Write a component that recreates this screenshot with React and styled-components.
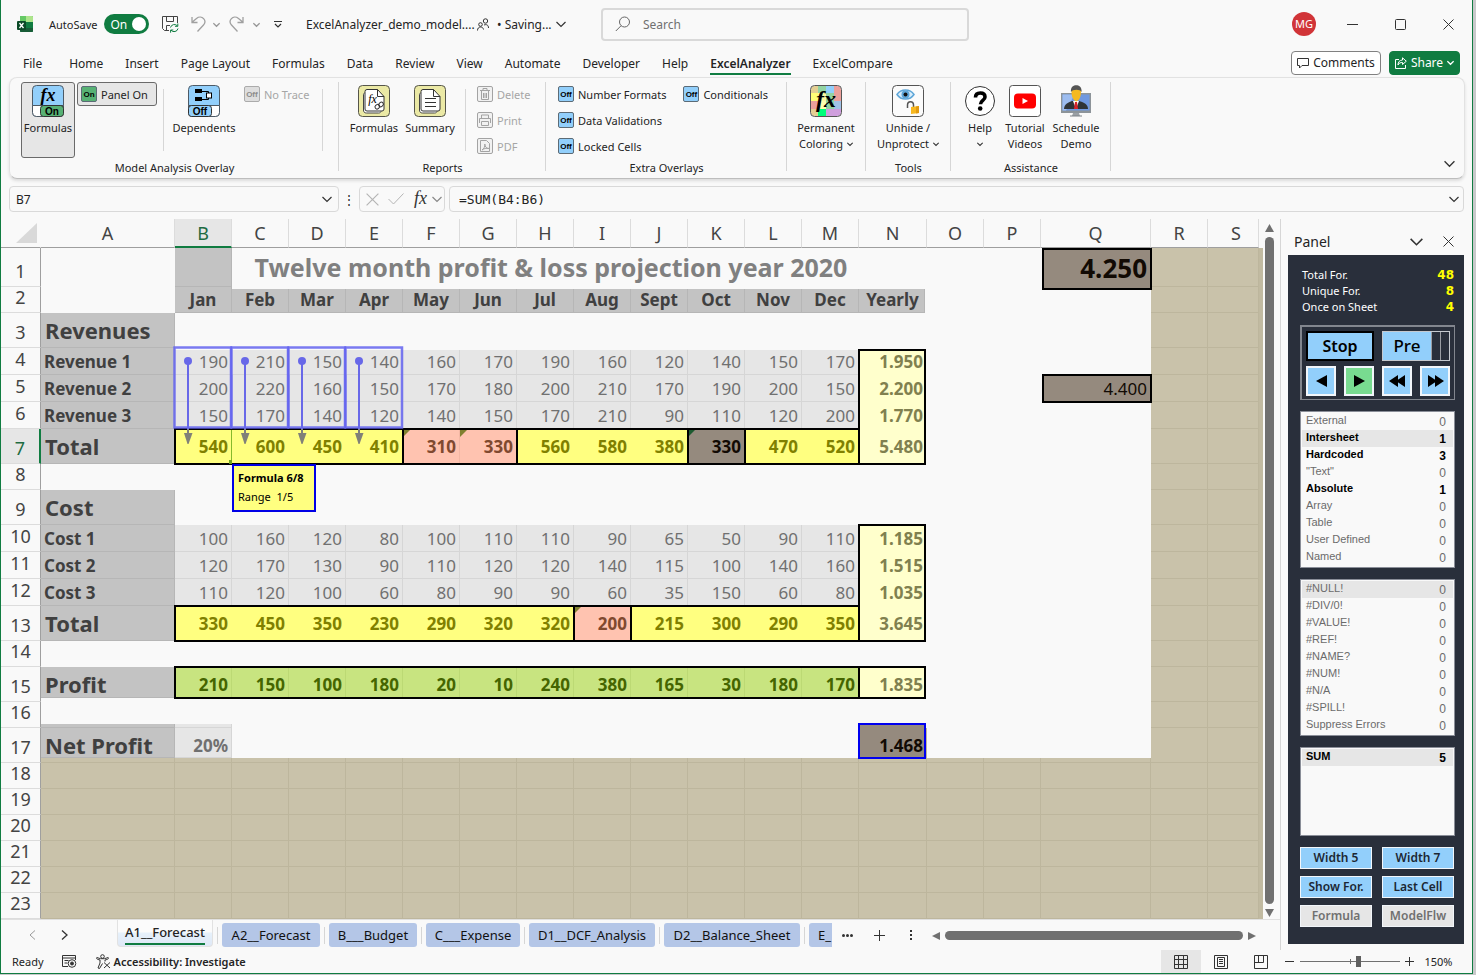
import React from 'react';
import styled, { createGlobalStyle, css } from 'styled-components';

const UI = '"Noto Sans", "Open Sans", sans-serif';
const SMALL = '"Liberation Sans", Arial, sans-serif';

const GlobalStyle = createGlobalStyle`
  *, *::before, *::after { box-sizing: border-box; }
  body { margin: 0; background: #c9c9cb; font-family: ${UI}; font-size: 12px; color: #242424; }
  button, input { font: inherit; color: inherit; margin: 0; padding: 0; }
  button { background: none; border: 0; cursor: pointer; }
  svg { display: block; flex: none; }
`;

const Window = styled.div`
  display: flex;
  flex-direction: column;
  min-height: calc(100vh - 1px);
  margin-right: 3px;
  background: #f9f9f9;
  border: 1px solid #107c41;
  border-top: 0;
  overflow: hidden;
`;

/* ---------- title bar ---------- */
const TitleBar = styled.header`
  display: grid;
  grid-template-columns: 600px minmax(120px, 368px) 1fr;
  align-items: center;
  height: 48px;
`;
const TitleLeft = styled.div`
  display: flex;
  align-items: center;
  padding-left: 16px;
  white-space: nowrap;
`;
const AutoSave = styled.label`
  display: flex;
  align-items: center;
  gap: 7px;
  width: 107px;
  margin-left: 16px;
  font-size: 11px;
`;
const Switch = styled.button`
  display: flex;
  align-items: center;
  justify-content: space-between;
  width: 45px;
  height: 20px;
  padding: 0 3px 0 6px;
  border-radius: 10px;
  background: #107c41;
  color: #fff;
  font-size: 12px;
  &::after { content: ''; width: 14px; height: 14px; border-radius: 50%; background: #fff; }
`;
const IconButton = styled.button`
  display: flex;
  align-items: center;
  justify-content: center;
  width: ${p => p.$w || 24}px;
  height: ${p => p.$h || 24}px;
  background: ${p => (p.$on ? '#e6e6e6' : 'transparent')};
`;
const FileName = styled.span`
  width: 166px;
  margin: 0 5px 0 10px;
  font-size: 12px;
`;
const Saving = styled.button`
  display: flex;
  align-items: center;
  gap: 4px;
  margin-left: 8px;
`;
const SearchBox = styled.label`
  display: flex;
  align-items: center;
  gap: 12px;
  height: 33px;
  padding: 0 12px;
  border: 2px solid #d9d9d9;
  border-radius: 4px;
  input { flex: 1; min-width: 0; border: 0; outline: 0; background: transparent; }
  input::placeholder { color: #707070; opacity: 1; }
`;
const TitleRight = styled.div`
  display: flex;
  align-items: center;
  justify-content: flex-end;
`;
const Avatar = styled.button`
  width: 24px;
  height: 24px;
  margin-right: 12px;
  border-radius: 50%;
  background: #d13438;
  color: #fff;
  font-size: 11px;
  line-height: 24px;
`;

/* ---------- ribbon tabs ---------- */
const TabRow = styled.nav`
  display: flex;
  align-items: center;
  gap: 22px;
  height: 29px;
  padding: 0 12px 0 22px;
`;
const RibbonTab = styled.button`
  height: 24px;
  padding-top: 4px;
  font-size: 12px;
  white-space: nowrap;
  border-bottom: 2px solid ${p => (p.$active ? '#107c41' : 'transparent')};
  font-weight: ${p => (p.$active ? 600 : 400)};
  &:first-child { margin-right: 5px; }
`;
const TabActions = styled.div`
  display: flex;
  gap: 8px;
  margin-left: auto;
`;
const ActionButton = styled.button`
  display: flex;
  align-items: center;
  justify-content: center;
  gap: 4px;
  width: ${p => (p.$primary ? 71 : 90)}px;
  height: 24px;
  border: 1px solid ${p => (p.$primary ? '#107c41' : '#808080')};
  border-radius: 4px;
  background: ${p => (p.$primary ? '#107c41' : '#fff')};
  color: ${p => (p.$primary ? '#fff' : '#242424')};
`;

/* ---------- ribbon ---------- */
const Ribbon = styled.section`
  display: flex;
  height: 102px;
  margin: 0 7px 0 8px;
  padding: 4px 0 3px;
  border: 1px solid #e2e2e2;
  border-bottom-color: #bdbdbd;
  border-radius: 8px;
  box-shadow: 0 2px 3px #dcdcdc;
`;
const Group = styled.div`
  display: flex;
  flex-direction: column;
  justify-content: space-between;
  flex: none;
  width: ${p => p.$w}px;
  padding-bottom: 1px;
  background: linear-gradient(#d6d6d6, #d6d6d6) right top / 1px 89px no-repeat;
`;
const GroupBody = styled.div`
  display: flex;
  align-items: flex-start;
  padding-left: ${p => p.$pad || 0}px;
`;
const GroupLabel = styled.div`
  height: 13px;
  font-size: 11px;
  line-height: 14px;
  text-align: center;
`;
const BigButton = styled.button`
  display: flex;
  flex-direction: column;
  align-items: center;
  width: ${p => p.$w || 56}px;
  height: 76px;
  padding-top: 2px;
  border: 1px solid ${p => (p.$pressed ? '#6a6a6a' : 'transparent')};
  border-radius: 3px;
  background: ${p => (p.$pressed ? '#e6e6e6' : 'transparent')};
  font-size: 11px;
  line-height: 16px;
  white-space: nowrap;
  span { display: flex; align-items: center; gap: 4px; height: 16px; }
  svg + span { margin-top: 3px; }
`;
const Rule = styled.div`
  width: 1px;
  height: 62px;
  margin: 7px ${p => p.$m || 4}px 0;
  background: #d6d6d6;
`;
const SmallStack = styled.div`
  display: flex;
  flex-direction: column;
  gap: 2px;
  margin: 0 ${p => p.$m || 0}px;
`;
const SmallButton = styled.button`
  display: flex;
  align-items: center;
  gap: 4px;
  height: 24px;
  padding: 0 8px 0 3px;
  border: 1px solid ${p => (p.$pressed ? '#6a6a6a' : 'transparent')};
  border-radius: 3px;
  background: ${p => (p.$pressed ? '#e6e6e6' : 'transparent')};
  color: ${p => (p.disabled ? '#a6a6a6' : '#242424')};
  font-size: 11px;
  white-space: nowrap;
`;
const Tile = styled.i`
  width: 16px;
  height: 16px;
  border: 1px solid ${p => (p.$tone === 'dim' ? '#ababab' : '#5c6b76')};
  border-radius: 2px;
  background: ${p => ({ on: '#57b174', off: '#92cffb', dim: '#dedede' }[p.$tone])};
  color: ${p => (p.$tone === 'dim' ? '#8c8c8c' : '#000')};
  font: bold 8px/15px ${SMALL};
  text-align: center;
`;
const RibbonEnd = styled.div`
  display: flex;
  flex: 1;
  align-items: flex-end;
  justify-content: flex-end;
  padding: 0 3px 0 0;
`;

/* ---------- formula bar ---------- */
const FormulaRow = styled.div`
  display: flex;
  align-items: center;
  gap: 4px;
  margin: 7px 8px 7px 8px;
  height: 26px;
`;
const Field = styled.div`
  display: flex;
  align-items: center;
  flex: ${p => p.$flex};
  height: 26px;
  padding: 0 ${p => p.$pad}px;
  border: 1px solid #d9d9d9;
  border-radius: 4px;
  input { flex: 1; min-width: 0; border: 0; outline: 0; background: transparent; }
`;
const CodeInput = styled.input`
  font-family: "DejaVu Sans Mono", monospace;
  font-size: 13px;
`;
const Dots = styled.span`
  width: 12px;
  text-align: center;
`;

/* ---------- work area ---------- */
const Work = styled.main`
  display: flex;
  flex: 1;
`;
const BookArea = styled.div`
  display: flex;
  flex-direction: column;
  flex: 1;
  min-width: 0;
`;
const SheetRow = styled.div`
  display: flex;
`;
const Viewport = styled.div`
  flex: 1;
  min-width: 0;
  overflow: hidden;
  background: linear-gradient(#f9f9f9 29px, #c1baa1 29px);
`;
const Grid = styled.table`
  table-layout: fixed;
  width: 0;
  border-collapse: separate;
  border-spacing: 0;
  font-family: ${UI};
  font-size: 17px;
  line-height: 22px;
  white-space: nowrap;
  th, td { padding: 0; }
`;
const ColHead = styled.th`
  height: 29px;
  background: ${p => (p.$on ? '#e6e6e6' : '#f9f9f9')};
  border-right: 1px solid #dcdcdc;
  border-bottom: ${p => (p.$on ? '2px solid #107c41' : '1px solid #9f9f9f')};
  color: ${p => (p.$on ? '#1e6b41' : '#444')};
  font-size: 18px;
  font-weight: 400;
  &&:last-child { padding-left: 6px; }
`;
const Corner = styled(ColHead)`
  border-right-color: #f9f9f9;
  svg { margin-left: 14px; }
`;
const RowHead = styled.th`
  && { padding-bottom: 4px; }
  vertical-align: bottom;
  line-height: 21px;
  background: ${p => (p.$on ? '#e6e6e6' : '#f9f9f9')};
  border-right: ${p => (p.$on ? '2px solid #107c41' : '1px solid #9f9f9f')};
  border-bottom: 1px solid #dcdcdc;
  color: ${p => (p.$on ? '#1e6b41' : '#444')};
  font-size: 18px;
  font-weight: 400;
`;

const kinds = {
  blank: { fill: '#f9f9f9', text: '#808080' },
  head: { fill: '#c3c3c3', text: '#404040', line: '#b6b6b6' },
  num: { fill: '#e6e6e6', text: '#707070', line: '#d6d6d6' },
  yellow: { fill: '#ffff80', text: '#808000' },
  pink: { fill: '#ffc3b0', text: '#80492f', line: '#f3b7a4' },
  brown: { fill: '#958a7e', text: '#120a04' },
  cream: { fill: '#ffffcc', text: '#80804f' },
  green: { fill: '#c8e480', text: '#456500', line: '#bcd974' },
  khaki: { fill: '#c9c2aa', text: '#000', line: '#bdb69d' },
};
const side = (p, s, n) => (p.$box && p.$box.includes(s) ? n : 0);

const Cell = styled.td`
  position: relative;
  z-index: ${p => (p.$trace ? 3 : p.$box ? 2 : 1)};
  && { padding: 0 4px ${p => (p.$size === 22 ? 2 : 0)}px ${p => (p.$size === 22 ? 4 : 3)}px; }
  background: ${p => (p.$base ? kinds.khaki.fill : kinds.blank.fill)};
  color: ${p => kinds[p.$kind].text};
  text-align: ${p => p.$align || 'right'};
  font-weight: ${p => (p.$bold ? 700 : 400)};
  font-size: ${p => p.$size || 17}px;
  ${p => p.$base && css`box-shadow: inset -1px -1px ${kinds.khaki.line};`}
  &::before {
    content: '';
    position: absolute;
    z-index: -1;
    inset: ${p => p.$t || 0}px ${p => p.$r || 0}px ${p => p.$b || 0}px ${p => p.$l || 0}px;
    background: ${p => kinds[p.$kind].fill};
    ${p => kinds[p.$kind].line && css`box-shadow: inset -1px -1px ${kinds[p.$kind].line};`}
  }
  ${p => p.$box && css`
    &::after {
      content: '';
      position: absolute;
      pointer-events: none;
      inset: ${(p.$t || 0) - side(p, 't', 1)}px ${(p.$r || 0) - side(p, 'r', 1)}px
        ${(p.$b || 0) - side(p, 'b', 1)}px ${(p.$l || 0) - side(p, 'l', 1)}px;
      border: 0 solid ${p.$ink || '#000'};
      border-width: ${side(p, 't', 2)}px ${side(p, 'r', 2)}px ${side(p, 'b', 2)}px ${side(p, 'l', 2)}px;
    }
  `}
`;
const TitleCell = styled(Cell)`
  && { padding: 0 57px 2px 0; }
`;
const Flag = styled.i`
  position: absolute;
  top: 0;
  left: 0;
  border: 4px solid transparent;
  border-top-color: ${p => p.$color};
  border-left-color: ${p => p.$color};
`;
const TraceSvg = styled.svg`
  position: absolute;
  top: -2px;
  left: -2px;
  z-index: 1;
`;
const Selection = styled.i`
  position: absolute;
  top: 1px;
  right: 0;
  bottom: 1px;
  border-right: 1px solid #86b92c;
  &::after {
    content: '';
    position: absolute;
    z-index: 1;
    right: -2px;
    bottom: -1px;
    width: 4px;
    height: 4px;
    background: #6fa51c;
  }
`;
const Note = styled.div`
  position: absolute;
  top: 0;
  left: 0;
  z-index: 5;
  width: 84px;
  height: 48px;
  padding: 2px 4px;
  border: 2px solid #0000e6;
  background: #ffff80;
  color: #000;
  font: 11px/19px ${UI};
  text-align: left;
  white-space: pre;
  b { display: block; }
`;

const VScroll = styled.div`
  display: flex;
  flex-direction: column;
  align-items: center;
  gap: 5px;
  width: 17px;
  padding: 5px 5px 2px 0;
`;
const Thumb = styled.div`
  flex: 1;
  width: ${p => (p.$h ? 'auto' : '9px')};
  height: ${p => (p.$h ? '9px' : 'auto')};
  border-radius: 5px;
  background: #707070;
`;

/* ---------- sheet tabs ---------- */
const SheetTabs = styled.div`
  display: flex;
  align-items: flex-start;
  height: 31px;
  padding-left: 19px;
  border-top: 1px solid #e0e0e0;
`;
const TabGap = styled.i`
  width: 1px;
  height: 17px;
  margin: 7px 4px 0;
  background: #d6d6d6;
`;
const SheetTab = styled.button`
  flex: none;
  width: ${p => p.$w}px;
  height: 24px;
  margin-top: 3px;
  border-radius: ${p => (p.$cut ? '3px 0 0 3px' : '3px')};
  background: #b4c6e7;
  color: #111;
  font-size: 13px;
  text-align: center;
  overflow: hidden;
  white-space: nowrap;
  text-indent: ${p => (p.$cut ? 8 : 0)}px;
`;
const ActiveSheet = styled.button`
  flex: none;
  width: 96px;
  height: 27px;
  margin-left: 32px;
  padding-bottom: 1px;
  border: 1px solid #e2e2e2;
  border-top: 0;
  border-radius: 0 0 4px 4px;
  background: linear-gradient(#fbfbfb 12px, #e6f1fb 13px, #dfe8f6);
  font-size: 13px;
  font-weight: 500;
  span { display: block; margin: 0 7px; line-height: 22px; border-bottom: 2px solid #107c41; white-space: nowrap; }
`;
const HScroll = styled.div`
  display: flex;
  flex: 1;
  align-items: center;
  gap: 5px;
  height: 31px;
  padding: 0 24px 0 5px;
`;

/* ---------- side panel ---------- */
const Panel = styled.aside`
  flex: none;
  width: 192px;
  padding: 0 8px 0 7px;
  border-left: 1px solid #d6d6d6;
`;
const PanelHead = styled.h2`
  display: flex;
  align-items: center;
  height: 36px;
  margin: 0;
  padding: 9px 0 0 6px;
  font-size: 14px;
  font-weight: 400;
  span { flex: 1; }
`;
const Dark = styled.div`
  height: 689px;
  padding: 12px 9px 0 12px;
  background: #292f3b;
`;
const Stats = styled.dl`
  display: grid;
  grid-template-columns: 1fr auto;
  margin: 0 0 10px;
  padding: 0 1px 0 2px;
  color: #fff;
  font: 11px/16px ${UI};
  dd { margin: 0; color: #ff0; font: bold 12px/16px "DejaVu Sans", sans-serif; text-align: right; }
`;
const Controls = styled.div`
  display: grid;
  grid-template-columns: repeat(4, 30px);
  gap: 5px 8px;
  height: 75px;
  margin-bottom: 11px;
  padding: 4px;
  border: 2px solid #82868e;
  border-right-width: 1px;
  border-bottom-width: 1px;
`;
const StopButton = styled.button`
  grid-column: span 2;
  height: 30px;
  border: 2px solid #000;
  background: #92cffb;
  color: #000;
  font-size: 16px;
  font-weight: 600;
  line-height: 24px;
`;
const PreButton = styled.button`
  display: grid;
  grid-template-columns: 48px 1fr 1fr;
  grid-column: span 2;
  height: 30px;
  border: 1px solid #c5c9cf;
  color: #000;
  font-size: 17px;
  font-weight: 500;
  line-height: 28px;
  span { background: #92cffb; }
  i { border-left: 1px solid #9a9da3; }
`;
const PlayButton = styled.button`
  display: flex;
  align-items: center;
  justify-content: center;
  height: 30px;
  border: 2px solid #f2f6fa;
  background: ${p => (p.$go ? '#78db90' : '#92cffb')};
`;
const ListBox = styled.div`
  min-height: ${p => p.$min || 0}px;
  margin-bottom: 11px;
  padding: 1px;
  border: 1px solid #8a8e98;
  background: #f9f9f9;
`;
const ListTable = styled.table`
  width: 100%;
  border-collapse: collapse;
  font: 11px/17px ${SMALL};
`;
const ListLine = styled.tr`
  height: 17px;
  background: ${p => (p.$hot ? '#e6e6e6' : 'transparent')};
  color: ${p => (p.$strong ? '#000' : '#6b6b6b')};
  font-weight: ${p => (p.$strong ? 700 : 400)};
  th { padding: 0 0 2px 4px; text-align: left; font-weight: inherit; line-height: 15px; }
  td { padding: 2px 7px 0 0; text-align: right; line-height: 15px; font-size: 12px; }
`;
const PanelButtons = styled.div`
  display: grid;
  grid-template-columns: 72px 72px;
  gap: 7px 10px;
`;
const PanelButton = styled.button`
  height: 22px;
  border: 1px solid #f2f6fa;
  background: ${p => (p.disabled ? '#e6e6e6' : '#92cffb')};
  color: ${p => (p.disabled ? '#707070' : '#1c2733')};
  font-size: 12px;
  font-weight: 600;
  line-height: 18px;
`;

/* ---------- status bar ---------- */
const StatusBar = styled.footer`
  display: flex;
  align-items: center;
  height: 23px;
  padding: 0 10px 0 11px;
  font-size: 11px;
`;
const StatusLink = styled.button`
  display: flex;
  align-items: center;
  gap: 3px;
  font-weight: 600;
`;
const ZoomRange = styled.input.attrs({ type: 'range' })`
  appearance: none;
  width: 100px;
  height: 12px;
  margin: 0 3px;
  background: linear-gradient(#707070, #707070) center / 100% 1px no-repeat,
    linear-gradient(#707070, #707070) 50px 50% / 1px 5px no-repeat;
  &::-webkit-slider-thumb { appearance: none; width: 5px; height: 11px; background: #5f5f5f; }
`;
const Right = styled.div`
  display: flex;
  align-items: center;
  margin-left: auto;
`;

/* ---------- icons ---------- */
const Chevron = ({ size = 8, color = '#333' }) => (
  <svg width={size} height={size} viewBox="0 0 10 10" fill="none" stroke={color} strokeWidth={size > 9 ? 1.2 : 1.9}>
    <path d="M0.5 3l4.500 4.500 4.500-4.500" />
  </svg>
);
const Close = ({ size = 11, color = '#333' }) => (
  <svg width={size} height={size} viewBox="0 0 11 11" stroke={color} fill="none"><path d="M.5.5l10 10M10.500.5l-10 10" /></svg>
);
const Tri = ({ d, color = '#707070', w = 8, h = 8 }) => (
  <svg width={w} height={h} viewBox="0 0 8 8" preserveAspectRatio="none" fill={color}><path d={d} /></svg>
);
const ExcelLogo = () => (
  <svg width="16" height="16" viewBox="0 0 16 16">
    <rect x="3" width="13" height="16" rx="1" fill="#21a366" />
    <path d="M3 1a1 1 0 0 1 1-1h5v6H3z" fill="#66c965" /><path d="M9 0h6a1 1 0 0 1 1 1v5H9z" fill="#aee58c" />
    <path d="M3 6h13v9a1 1 0 0 1-1 1H4a1 1 0 0 1-1-1z" fill="#185c37" /><path d="M9 6h7v6H9z" fill="#107c41" />
    <rect y="5" width="9" height="9" rx="1" fill="#0b4a27" />
    <path d="M2.500 7l4 5M6.500 7l-4 5" stroke="#fff" strokeWidth="1.300" />
  </svg>
);
const SaveIcon = () => (
  <svg width="17" height="17" viewBox="0 0 17 17" fill="none" stroke="#444">
    <path d="M7 14.500H2.500l-2-2v-12h15V7M4.500.5v5h7v-5M4.500 14V9.500H8" />
    <path d="M8.500 11.500a4 4 0 0 1 7-1.500M15.800 7.500V10.300H13M16 12.500a4 4 0 0 1-7 1.700M8.600 16.700V14H11.300" stroke="#107c41" />
  </svg>
);
const UndoIcon = ({ flip }) => (
  <svg width="15" height="17" viewBox="0 0 15 17" fill="none" stroke="#a0a0a0" strokeWidth="1.300">
    <g transform={flip ? 'matrix(-1 0 0 1 15 0)' : undefined}>
      <path d="M1 1v5.500h5.500M1.300 6L5.500 2.400C8 .4 11 .8 12.600 2.600c1.800 2 1.600 4.500-.1 6.400L6.500 15.500" />
    </g>
  </svg>
);
const CustomizeIcon = () => (
  <svg width="8" height="8" viewBox="0 0 8 8" fill="none" stroke="#333" strokeWidth="1.200"><path d="M0 1.500h8M1 4l3 3 3-3" /></svg>
);
const PeopleIcon = () => (
  <svg width="12" height="13" viewBox="0 0 12 13" fill="none" stroke="#333">
    <circle cx="3.500" cy="6.500" r="1.800" /><circle cx="8.500" cy="3" r="2.200" />
    <path d="M.5 12.500c0-2 1.200-3.500 3-3.500s2.700 1 3 2.500M7 7c2.500-1 4.500 0 4.500 3" />
  </svg>
);
const SearchIcon = () => (
  <svg width="16" height="16" viewBox="0 0 16 16" fill="none" stroke="#666"><circle cx="9.500" cy="6" r="5" /><path d="M6 9.800L.8 15" /></svg>
);
const CommentIcon = () => (
  <svg width="12" height="12" viewBox="0 0 12 12" fill="none" stroke="#333"><path d="M.5 1.500h11v7H5L2.500 11V8.500h-2z" /></svg>
);
const ShareIcon = () => (
  <svg width="12" height="12" viewBox="0 0 12 12" fill="none" stroke="#fff">
    <path d="M4 2.500H.5v9h10V8M7.500.8l3.800 3.400L7.500 7.500V5.500C5.500 5.400 4 6 3 8c0-3 1.500-4.800 4.500-5z" />
  </svg>
);
const FormulaOverlayIcon = () => (
  <svg width="32" height="32" viewBox="0 0 32 32">
    <rect x=".5" y=".5" width="31" height="31" rx="4" fill="#92cffb" stroke="#4d5a66" />
    <path d="M.5 20.500h31v7a4 4 0 0 1-4 4h-23a4 4 0 0 1-4-4z" fill="#fff" stroke="#4d5a66" />
    <rect x="8.500" y="20.500" width="23" height="11" rx="3" fill="#57b174" stroke="#333" />
    <text x="16" y="16" textAnchor="middle" fontFamily="Liberation Serif" fontStyle="italic" fontWeight="bold" fontSize="18">fx</text>
    <text x="20" y="29.500" textAnchor="middle" fontFamily="Liberation Sans" fontWeight="bold" fontSize="10">On</text>
  </svg>
);
const DependentsIcon = () => (
  <svg width="32" height="32" viewBox="0 0 32 32">
    <rect x=".5" y=".5" width="31" height="31" rx="4" fill="#92cffb" stroke="#4d5a66" />
    <path d="M.5 20.500h31v7a4 4 0 0 1-4 4h-23a4 4 0 0 1-4-4z" fill="#fff" stroke="#4d5a66" />
    <rect x=".5" y="20.500" width="23" height="11" rx="3" fill="#92cffb" stroke="#333" />
    <path d="M7 4h7v4H7zM7 12h7v4H7z" /><path d="M14 6.500h6.500v8H14" fill="none" stroke="#000" />
    <rect x="18.500" y="8" width="5" height="5" fill="#fff" stroke="#000" />
    <text x="12" y="29.500" textAnchor="middle" fontFamily="Liberation Sans" fontWeight="bold" fontSize="10">Off</text>
  </svg>
);
const ReportIcon = ({ formulas }) => (
  <svg width="32" height="32" viewBox="0 0 32 32">
    <rect x=".5" y=".5" width="31" height="31" rx="4" fill="#ebe9a5" stroke="#55554a" />
    <path d="M6.500 8c-1 .5-1 1-1 2v15c0 2 1 3 3 3h12c1.500 0 2-.5 2.500-1.500" fill="#fff" stroke="#444" />
    <path d="M9 4.500h10.500l6.500 7V24a2 2 0 0 1-2 2H9a2 2 0 0 1-2-2V6.500a2 2 0 0 1 2-2z" fill="#fff" stroke="#333" />
    <path d="M19.500 4.500v7H26" fill="none" stroke="#333" />
    {formulas ? (
      <>
        <text x="14.500" y="18" textAnchor="middle" fontFamily="Liberation Serif" fontStyle="italic" fontSize="12">fx</text>
        <g fill="none" stroke="#333"><rect x="17" y="20" width="5" height="4" rx="2" transform="rotate(-40 19 22)" /><rect x="20.500" y="17.500" width="5" height="4" rx="2" transform="rotate(-40 23 19.500)" /></g>
      </>
    ) : <path d="M11 13.500h11M11 17.500h11M11 21.500h11" stroke="#333" />}
  </svg>
);
const SmallDisabled = ({ children }) => (
  <svg width="16" height="16" viewBox="0 0 16 16" fill="none" stroke="#a3a3a3">
    <rect x=".5" y=".5" width="15" height="15" rx="1.500" fill="#f1f1f1" />{children}
  </svg>
);
const palette = ['#e4cf93', '#92d3a2', '#92cffb', '#eca09b', '#ffff76', '#fff8a0', '#92d3a2', '#eca09b', '#eca09b', '#ffffb0', '#92d3a2', '#a1c3e6', '#e4cf93', '#00ff7b', '#cf9edd', '#cf9edd'];
const ColoringIcon = () => (
  <svg width="32" height="32" viewBox="0 0 32 32">
    <clipPath id="tile"><rect x="1" y="1" width="30" height="30" rx="4" /></clipPath>
    <g clipPath="url(#tile)">{palette.map((c, i) => <rect key={i} x={(i % 4) * 8} y={Math.floor(i / 4) * 8} width="8" height="8" fill={c} />)}</g>
    <rect x=".5" y=".5" width="31" height="31" rx="4" fill="none" stroke="#555" />
    <text x="16" y="22" textAnchor="middle" fontFamily="Liberation Serif" fontStyle="italic" fontWeight="bold" fontSize="24">fx</text>
  </svg>
);
const UnhideIcon = () => (
  <svg width="32" height="32" viewBox="0 0 32 32">
    <rect x=".5" y=".5" width="31" height="31" rx="4" fill="#fbfbfb" stroke="#555" />
    <path d="M5 9.500c4-6 13-6 17 0-4 6-13 6-17 0z" fill="#d8edfb" stroke="#5ea6d8" strokeWidth="1.500" />
    <circle cx="13.500" cy="9.500" r="4" fill="#5ea6d8" /><circle cx="13.500" cy="9.500" r="2" fill="#111" />
    <path d="M15.500 23v-3c0-4.500 6-4.500 6 0v3" fill="none" stroke="#555" strokeWidth="1.500" />
    <path d="M19 22l8-1v7l-8 1z" fill="#f7b81f" /><path d="M24 21.500l3-.5v7l-3 .5z" fill="#e29a10" />
  </svg>
);
const HelpIcon = () => (
  <svg width="32" height="32" viewBox="0 0 32 32">
    <circle cx="16" cy="16" r="14.500" fill="#fff" stroke="#333" />
    <path d="M11.500 12.500c0-3 2-4.500 4.800-4.500 2.900 0 4.700 1.600 4.700 4 0 3.500-4.500 3.300-4.500 7.200" fill="none" stroke="#000" strokeWidth="3.600" />
    <circle cx="16.200" cy="23.500" r="2.300" />
  </svg>
);
const VideoIcon = () => (
  <svg width="32" height="32" viewBox="0 0 32 32">
    <rect x=".5" y=".5" width="31" height="31" rx="3" fill="#fff" stroke="#555" />
    <rect x="5" y="8.500" width="22" height="15" rx="4" fill="red" /><path d="M13.500 13v6l5.500-3z" fill="#fff" />
  </svg>
);
const DemoIcon = () => (
  <svg width="32" height="32" viewBox="0 0 32 32">
    <rect x="1" y="8" width="30" height="20" fill="#8d9499" /><rect x="2.500" y="9.500" width="27" height="16" fill="#6f98e0" />
    <path d="M2.500 9.500h12L6 25.500H2.500z" fill="#9dbdf0" />
    <path d="M4 24c0-5 5-7 8-8h7c4 1 9 3 9 8z" fill="#2f3437" /><path d="M13 16h6l-3 8z" fill="#fff" /><path d="M15 17h2l1 7h-4z" fill="#d8232a" />
    <path d="M11.500 6c0-5 9.500-5 9.500 0 0 5-1 9-4.700 10.500C12.500 15 11.500 11 11.500 6z" fill="#f5b921" />
    <path d="M11 7c-1.500-9 12-9 10.500 0-1-3-9-3-10.500 0z" fill="#555" />
    <path d="M13 28h6l1 3h-8z" fill="#9aa0a5" /><path d="M10 31h12" stroke="#7c8287" />
  </svg>
);
const MacroIcon = () => (
  <svg width="15" height="13" viewBox="0 0 15 13" fill="none" stroke="#333">
    <path d="M6 11.500H.5V.5h13V5M.5 3h13M2.500 5.500h4M2.500 8h3" /><circle cx="10" cy="8.500" r="3.800" /><circle cx="10" cy="8.500" r="1.500" fill="#333" />
  </svg>
);
const AccessIcon = () => (
  <svg width="15" height="15" viewBox="0 0 15 15" fill="none" stroke="#333">
    <circle cx="6.500" cy="2.500" r="1.800" /><path d="M.8 3.500c-.8 1.200 0 1.700 3.200 2.500v3l-2 5 1.500.5 3-5M12.200 3.500c.8 1.200 0 1.700-3.200 2.500v1.500M.8 3.500l3.700 1.200h4l3.700-1.200M8 8.500l6 5.500M14 8.500l-6 5.500" />
  </svg>
);
const GridIcon = () => (
  <svg width="14" height="14" viewBox="0 0 14 14" fill="none" stroke="#333"><path d="M.5.5h13v13H.5zM.5 4.500h13M.5 9.500h13M4.500.5v13M9.500.5v13" /></svg>
);
const PageIcon = () => (
  <svg width="14" height="14" viewBox="0 0 14 14" fill="none" stroke="#333"><path d="M.5.5h13v13H.5zM3.500 2.500h7v9h-7zM5 4.500h4M5 6.500h4M5 8.500h4" /></svg>
);
const BreakIcon = () => (
  <svg width="14" height="14" viewBox="0 0 14 14" fill="none" stroke="#333"><path d="M.5.5h13v13H.5zM.5 7.500h9v-7M4.500 .5v7" /></svg>
);

/* ---------- sheet model ---------- */
const LETTERS = 'ABCDEFGHIJKLMNOPQRS'.split('');
const WIDTHS = { A: 134, N: 68, Q: 110, S: 51 };
const MONTHS = LETTERS.slice(1, 13);
const HEIGHTS = [39, 26, 35, 27, 27, 27, 35, 26, 35, 27, 27, 27, 35, 26, 35, 26, 35, 26, 26, 26, 26, 26, 26];

const spread = (values, make) => Object.fromEntries(values.map((v, i) => [MONTHS[i], make(v, i)]));
const numbers = (values, extra) => spread(values, v => ({ kind: 'num', v, ...extra }));
const label = (v, big) => ({ kind: 'head', v, bold: true, align: 'left', size: big ? 22 : 17 });
const yearly = (v, box) => ({ kind: 'cream', v, bold: true, box, r: 2 });
const boxed = (values, kind, groups, flags = {}, extra = {}) =>
  spread(values, (v, i) => {
    const g = groups.find(([from, to]) => i >= from && i <= to);
    return {
      kind: g[2] || kind, v, bold: true, flag: flags[i],
      box: `tb${i === g[0] ? 'l' : ''}${i === g[1] ? 'r' : ''}`, ...extra,
    };
  });

const traced = cells => {
  'BCDE'.split('').forEach(c => { cells[c].trace = true; });
  return cells;
};

const CELLS = {
  1: { B: { kind: 'head' }, Q: { kind: 'brown', v: '4.250', bold: true, size: 26, box: 'tlr', l: 2, t: 1 } },
  2: {
    B: { kind: 'head', v: 'Jan', bold: true, align: 'center' },
    ...Object.fromEntries(['Feb', 'Mar', 'Apr', 'May', 'Jun', 'Jul', 'Aug', 'Sept', 'Oct', 'Nov', 'Dec'].map((v, i) => [
      MONTHS[i + 1], { kind: 'head', v, bold: true, align: 'center', t: 2 }])),
    N: { kind: 'head', v: 'Yearly', bold: true, align: 'center', t: 2, r: 2 },
    Q: { kind: 'brown', box: 'lrb', l: 2, b: 24 },
  },
  3: { A: label('Revenues', true) },
  4: { A: label('Revenue 1'), ...traced(numbers([190, 210, 150, 140, 160, 170, 190, 160, 120, 140, 150, 170], { t: 2 })), N: { ...yearly('1.950', 'tlr'), t: 2 } },
  5: { A: label('Revenue 2'), ...numbers([200, 220, 160, 150, 170, 180, 200, 210, 170, 190, 200, 150]), N: yearly('2.200', 'lr'), Q: { kind: 'brown', v: '4.400', box: 'tlrb', l: 2 } },
  6: { A: label('Revenue 3'), ...numbers([150, 170, 140, 120, 140, 150, 170, 210, 90, 110, 120, 200]), N: yearly('1.770', 'lr') },
  7: {
    A: label('Total', true),
    ...boxed([540, 600, 450, 410, 310, 330, 560, 580, 380, 330, 470, 520], 'yellow',
      [[0, 3], [4, 5, 'pink'], [6, 8], [9, 9, 'brown'], [10, 11]], { 4: '#80802f', 5: '#80802f', 9: '#1d5a30' }),
    N: yearly('5.480', 'lrb'),
  },
  9: { A: label('Cost', true) },
  10: { A: label('Cost 1'), ...numbers([100, 160, 120, 80, 100, 110, 110, 90, 65, 50, 90, 110]), N: yearly('1.185', 'tlr') },
  11: { A: label('Cost 2'), ...numbers([120, 170, 130, 90, 110, 120, 120, 140, 115, 100, 140, 160]), N: yearly('1.515', 'lr') },
  12: { A: label('Cost 3'), ...numbers([110, 120, 100, 60, 80, 90, 90, 60, 35, 150, 60, 80]), N: yearly('1.035', 'lr') },
  13: {
    A: label('Total', true),
    ...boxed([330, 450, 350, 230, 290, 320, 320, 200, 215, 300, 290, 350], 'yellow', [[0, 6], [7, 7, 'pink'], [8, 11]], { 7: '#80802f' }),
    N: yearly('3.645', 'lrb'),
  },
  15: {
    A: { ...label('Profit', true), b: 4 },
    ...boxed([210, 150, 100, 180, 20, 10, 240, 380, 165, 30, 180, 170], 'green', [[0, 11]], {}, { b: 4 }),
    N: { ...yearly('1.835', 'tlrb'), b: 4 },
  },
  16: { A: { kind: 'head', t: 22 }, B: { kind: 'num', t: 22 }, N: { kind: 'brown', t: 22, r: 2, box: 'tlr', ink: '#0000f0' } },
  17: {
    A: { ...label('Net Profit', true), b: 5 },
    B: { kind: 'num', v: '20%', bold: true, b: 5 },
    N: { kind: 'brown', v: '1.468', bold: true, b: 5, r: 2, box: 'lrb', ink: '#0000f0' },
  },
};

const Trace = () => (
  <TraceSvg width="62" height="102" viewBox="0 0 62 102" aria-hidden="true">
    <rect x="1.500" y="1.500" width="56.500" height="80" fill="none" stroke="#6464f0" strokeOpacity=".85" strokeWidth="2.500" />
    <circle cx="15" cy="15" r="4" fill="#6868e8" />
    <path d="M15 15v68" stroke="#6868e8" strokeWidth="2" />
    <path d="M15 83v5" stroke="#808080" strokeWidth="2" />
    <path d="M11 87h8.500L15.500 98h-1z" fill="#808078" />
  </TraceSvg>
);

function SheetCell({ row, col }) {
  const c = (CELLS[row] || {})[col];
  const outside = row > 17 || col === 'R' || col === 'S';
  if (!c) {
    return (
      <Cell $kind={outside ? 'khaki' : 'blank'} $base={!outside && row === 17} $b={!outside && row === 17 ? 5 : 0}>
        {row === 8 && col === 'C' && <Note><b>Formula 6/8</b>{'Range  1/5'}</Note>}
      </Cell>
    );
  }
  return (
    <Cell
      $kind={c.kind} $t={c.t} $r={c.r} $b={c.b} $l={c.l} $box={c.box} $ink={c.ink}
      $bold={c.bold} $align={c.align} $size={c.size} $trace={c.trace} $base={row === 17}
    >
      {c.v}
      {c.flag && <Flag $color={c.flag} />}
      {c.trace && <Trace />}
      {row === 7 && col === 'B' && <Selection />}
    </Cell>
  );
}

/* the cell that carries the note stacks over the rows below it */
const SheetLine = styled.tr`
  height: ${p => p.$h}px;
  td:has(${Note}) { z-index: 4; }
`;

function Sheet() {
  return (
    <Grid>
      <colgroup>
        <col style={{ width: 40 }} />
        {LETTERS.map(l => <col key={l} style={{ width: WIDTHS[l] || 57 }} />)}
      </colgroup>
      <thead>
        <tr>
          <Corner><svg width="23" height="22" viewBox="0 0 23 22"><path d="M22 1v20H1z" fill="#d9d9d9" /></svg></Corner>
          {LETTERS.map(l => <ColHead key={l} scope="col" $on={l === 'B'}>{l}</ColHead>)}
        </tr>
      </thead>
      <tbody>
        {HEIGHTS.map((h, i) => {
          const row = i + 1;
          return (
            <SheetLine key={row} $h={h}>
              <RowHead scope="row" $on={row === 7}>{row}</RowHead>
              {row === 1 ? (
                <>
                  <SheetCell row={1} col="A" />
                  <SheetCell row={1} col="B" />
                  <TitleCell colSpan={12} $kind="blank" $bold $align="center" $size={25}>
                    Twelve month profit &amp; loss projection year 2020
                  </TitleCell>
                  {LETTERS.slice(14).map(l => <SheetCell key={l} row={1} col={l} />)}
                </>
              ) : LETTERS.map(l => <SheetCell key={l} row={row} col={l} />)}
            </SheetLine>
          );
        })}
      </tbody>
    </Grid>
  );
}

/* ---------- page parts ---------- */
const Off = ({ children }) => <SmallButton><Tile $tone="off">Off</Tile>{children}</SmallButton>;

const List = ({ rows, hot, min }) => (
  <ListBox $min={min}>
    <ListTable>
      <tbody>
        {rows.map(([name, value]) => (
          <ListLine key={name} $strong={value > 0} $hot={name === hot}>
            <th scope="row">{name}</th><td>{value}</td>
          </ListLine>
        ))}
      </tbody>
    </ListTable>
  </ListBox>
);

const TABS = ['File', 'Home', 'Insert', 'Page Layout', 'Formulas', 'Data', 'Review', 'View', 'Automate', 'Developer', 'Help', 'ExcelAnalyzer', 'ExcelCompare'];
const SHEETS = [['A2__Forecast', 98], ['B___Budget', 88], ['C___Expense', 94], ['D1__DCF_Analysis', 126], ['D2__Balance_Sheet', 136]];

export default function App() {
  return (
    <>
      <GlobalStyle />
      <Window>
        <TitleBar>
          <TitleLeft>
            <ExcelLogo />
            <AutoSave>AutoSave<Switch role="switch" aria-checked="true">On</Switch></AutoSave>
            <IconButton $w={28} aria-label="Save"><SaveIcon /></IconButton>
            <IconButton $w={28} aria-label="Undo"><UndoIcon /></IconButton>
            <IconButton $w={8} aria-label="Undo history"><Chevron size={7} color="#999" /></IconButton>
            <IconButton $w={32} aria-label="Redo"><UndoIcon flip /></IconButton>
            <IconButton $w={8} aria-label="Redo history"><Chevron size={7} color="#999" /></IconButton>
            <IconButton $w={36} aria-label="Customize toolbar"><CustomizeIcon /></IconButton>
            <FileName>ExcelAnalyzer_demo_model....</FileName>
            <PeopleIcon />
            <Saving>• Saving...<Chevron size={10} /></Saving>
          </TitleLeft>
          <SearchBox><SearchIcon /><input placeholder="Search" aria-label="Search" /></SearchBox>
          <TitleRight>
            <Avatar>MG</Avatar>
            <IconButton $w={48} aria-label="Minimize"><svg width="11" height="11"><path d="M0 5.500h11" stroke="#333" /></svg></IconButton>
            <IconButton $w={48} aria-label="Maximize"><svg width="11" height="11"><rect x=".5" y=".5" width="10" height="10" rx="1" fill="none" stroke="#333" /></svg></IconButton>
            <IconButton $w={48} aria-label="Close"><Close /></IconButton>
          </TitleRight>
        </TitleBar>

        <TabRow>
          {TABS.map(t => <RibbonTab key={t} $active={t === 'ExcelAnalyzer'}>{t}</RibbonTab>)}
          <TabActions>
            <ActionButton><CommentIcon />Comments</ActionButton>
            <ActionButton $primary><ShareIcon />Share<Chevron size={7} color="#fff" /></ActionButton>
          </TabActions>
        </TabRow>

        <Ribbon>
          <Group $w={329}>
            <GroupBody $pad={11}>
              <BigButton $w={54} $pressed><FormulaOverlayIcon /><span>Formulas</span></BigButton>
              <SmallStack $m={2}>
                <SmallButton $pressed><Tile $tone="on">On</Tile>Panel On</SmallButton>
              </SmallStack>
              <Rule />
              <BigButton $w={72}><DependentsIcon /><span>Dependents</span></BigButton>
              <SmallButton disabled><Tile $tone="dim">Off</Tile>No Trace</SmallButton>
              <Rule />
            </GroupBody>
            <GroupLabel>Model Analysis Overlay</GroupLabel>
          </Group>
          <Group $w={207}>
            <GroupBody $pad={7}>
              <BigButton><ReportIcon formulas /><span>Formulas</span></BigButton>
              <BigButton><ReportIcon /><span>Summary</span></BigButton>
              <Rule $m={7} />
              <SmallStack>
                <SmallButton disabled><SmallDisabled><path d="M3 4.500h10M6 4V2.500h4V4M4.500 5v8.500h7V5M6.500 7v5M8 7v5M9.500 7v5" /></SmallDisabled>Delete</SmallButton>
                <SmallButton disabled><SmallDisabled><path d="M4.500 6V3h7v3M2.500 11V6.500h11V11M4.500 9.500h7v4h-7z" /></SmallDisabled>Print</SmallButton>
                <SmallButton disabled><SmallDisabled><path d="M3.500 2.500h6l3 3v8h-9zM5 12c2-1 3-3.500 2.800-6C8 9 9.500 10.500 12 10.500 9 10 7 10.500 5 12" /></SmallDisabled>PDF</SmallButton>
              </SmallStack>
            </GroupBody>
            <GroupLabel>Reports</GroupLabel>
          </Group>
          <Group $w={241}>
            <GroupBody $pad={8}>
              <SmallStack><Off>Number Formats</Off><Off>Data Validations</Off><Off>Locked Cells</Off></SmallStack>
              <SmallStack $m={4}><Off>Conditionals</Off></SmallStack>
            </GroupBody>
            <GroupLabel>Extra Overlays</GroupLabel>
          </Group>
          <Group $w={79}>
            <GroupBody $pad={3}>
              <BigButton $w={72}><ColoringIcon /><span>Permanent</span><span>Coloring <Chevron size={6} /></span></BigButton>
            </GroupBody>
          </Group>
          <Group $w={85}>
            <GroupBody $pad={6}>
              <BigButton $w={72}><UnhideIcon /><span>Unhide /</span><span>Unprotect <Chevron size={6} /></span></BigButton>
            </GroupBody>
            <GroupLabel>Tools</GroupLabel>
          </Group>
          <Group $w={160}>
            <GroupBody $pad={8}>
              <BigButton $w={42}><HelpIcon /><span>Help</span><span><Chevron size={6} /></span></BigButton>
              <BigButton $w={48}><VideoIcon /><span>Tutorial</span><span>Videos</span></BigButton>
              <BigButton $w={54}><DemoIcon /><span>Schedule</span><span>Demo</span></BigButton>
            </GroupBody>
            <GroupLabel>Assistance</GroupLabel>
          </Group>
          <RibbonEnd><IconButton aria-label="Collapse ribbon"><Chevron size={11} /></IconButton></RibbonEnd>
        </Ribbon>

        <FormulaRow>
          <Field $flex="0 0 330px" $pad={6}><input defaultValue="B7" aria-label="Name box" /><Chevron size={10} /></Field>
          <Dots>⋮</Dots>
          <Field $flex="0 0 86px" $pad={2}>
            <IconButton $w={20} aria-label="Cancel"><svg width="13" height="13" viewBox="0 0 11 11" stroke="#b5b5b5"><path d="M.5.5l10 10M10.500.5l-10 10" /></svg></IconButton>
            <IconButton $w={28} aria-label="Enter"><svg width="16" height="12" viewBox="0 0 16 12" fill="none" stroke="#b5b5b5"><path d="M.5 6l5 5L15.500.5" /></svg></IconButton>
            <IconButton $w={22} aria-label="Insert function"><svg width="22" height="22"><text x="4" y="16" fontFamily="Liberation Serif" fontStyle="italic" fontSize="18" fill="#333">fx</text></svg></IconButton>
            <Chevron size={10} color="#888" />
          </Field>
          <Field $flex="1 1 auto" $pad={9}>
            <CodeInput defaultValue="=SUM(B4:B6)" aria-label="Formula" />
            <IconButton $w={1} aria-label="Expand formula bar"><Chevron size={10} /></IconButton>
          </Field>
        </FormulaRow>

        <Work>
          <BookArea>
            <SheetRow>
              <Viewport><Sheet /></Viewport>
              <VScroll>
                <Tri d="M4 0l4 8H0z" w={9} />
                <Thumb />
                <Tri d="M4 8l4-8H0z" w={9} />
              </VScroll>
            </SheetRow>
            <SheetTabs>
              <IconButton $h={30} aria-label="Previous sheet"><svg width="7" height="10" fill="none" stroke="#999"><path d="M6 .5L1 5l5 4.500" /></svg></IconButton>
              <IconButton $w={41} $h={30} aria-label="Next sheet"><svg width="7" height="10" fill="none" stroke="#333" strokeWidth="1.300"><path d="M1 .5L6 5 1 9.500" /></svg></IconButton>
              <ActiveSheet><span>A1__Forecast</span></ActiveSheet>
              {SHEETS.map(([name, w]) => (
                <React.Fragment key={name}><TabGap /><SheetTab $w={w}>{name}</SheetTab></React.Fragment>
              ))}
              <TabGap /><SheetTab $w={23} $cut>E_</SheetTab>
              <IconButton $w={31} $h={30} aria-label="More sheets"><svg width="11" height="3" fill="#333"><circle cx="1.500" cy="1.500" r="1.500" /><circle cx="5.500" cy="1.500" r="1.500" /><circle cx="9.500" cy="1.500" r="1.500" /></svg></IconButton>
              <IconButton $w={32} $h={30} aria-label="New sheet"><svg width="11" height="11" stroke="#333"><path d="M5.500 0v11M0 5.500h11" /></svg></IconButton>
              <IconButton $w={32} $h={30} aria-label="Resize tabs"><svg width="2" height="11" fill="#333"><path d="M0 0h2v2H0zM0 4h2v2H0zM0 8h2v2H0z" /></svg></IconButton>
              <HScroll>
                <Tri d="M0 4l8-4v8z" />
                <Thumb $h />
                <Tri d="M8 4L0 0v8z" />
              </HScroll>
            </SheetTabs>
          </BookArea>

          <Panel>
            <PanelHead>
              <span>Panel</span>
              <IconButton $w={32} aria-label="Panel options"><Chevron size={13} /></IconButton>
              <IconButton $w={32} aria-label="Close panel"><Close /></IconButton>
            </PanelHead>
            <Dark>
              <Stats>
                <dt>Total For.</dt><dd>48</dd>
                <dt>Unique For.</dt><dd>8</dd>
                <dt>Once on Sheet</dt><dd>4</dd>
              </Stats>
              <Controls>
                <StopButton>Stop</StopButton>
                <PreButton><span>Pre</span><i /><i /></PreButton>
                <PlayButton aria-label="Previous"><Tri d="M0 4l8-4v8z" color="#000" w={11} h={12} /></PlayButton>
                <PlayButton $go aria-label="Next"><Tri d="M8 4L0 0v8z" color="#000" w={11} h={12} /></PlayButton>
                <PlayButton aria-label="First"><svg width="17" height="12"><path d="M0 6l9-6v12zM7 6l9-6v12z" /></svg></PlayButton>
                <PlayButton aria-label="Last"><svg width="17" height="12"><path d="M17 6L8 0v12zM10 6L1 0v12z" /></svg></PlayButton>
              </Controls>
              <List hot="Intersheet" rows={[['External', 0], ['Intersheet', 1], ['Hardcoded', 3], ['"Text"', 0], ['Absolute', 1], ['Array', 0], ['Table', 0], ['User Defined', 0], ['Named', 0]]} />
              <List hot="#NULL!" rows={[['#NULL!', 0], ['#DIV/0!', 0], ['#VALUE!', 0], ['#REF!', 0], ['#NAME?', 0], ['#NUM!', 0], ['#N/A', 0], ['#SPILL!', 0], ['Suppress Errors', 0]]} />
              <List hot="SUM" min={89} rows={[['SUM', 5]]} />
              <PanelButtons>
                <PanelButton>Width 5</PanelButton><PanelButton>Width 7</PanelButton>
                <PanelButton>Show For.</PanelButton><PanelButton>Last Cell</PanelButton>
                <PanelButton disabled>Formula</PanelButton><PanelButton disabled>ModelFlw</PanelButton>
              </PanelButtons>
            </Dark>
          </Panel>
        </Work>

        <StatusBar>
          <span>Ready</span>
          <IconButton $w={52} aria-label="Record macro"><MacroIcon /></IconButton>
          <StatusLink><AccessIcon />Accessibility: Investigate</StatusLink>
          <Right>
            <IconButton $w={40} $on aria-label="Normal view"><GridIcon /></IconButton>
            <IconButton $w={40} aria-label="Page layout"><PageIcon /></IconButton>
            <IconButton $w={40} aria-label="Page break preview"><BreakIcon /></IconButton>
            <IconButton $w={16} aria-label="Zoom out"><svg width="9" height="9"><path d="M0 4.500h9" stroke="#333" /></svg></IconButton>
            <ZoomRange min="0" max="100" defaultValue="59" aria-label="Zoom" />
            <IconButton $w={12} aria-label="Zoom in"><svg width="9" height="9" stroke="#333"><path d="M0 4.500h9M4.500 0v9" /></svg></IconButton>
            <IconButton $w={47}>150%</IconButton>
          </Right>
        </StatusBar>
      </Window>
    </>
  );
}
